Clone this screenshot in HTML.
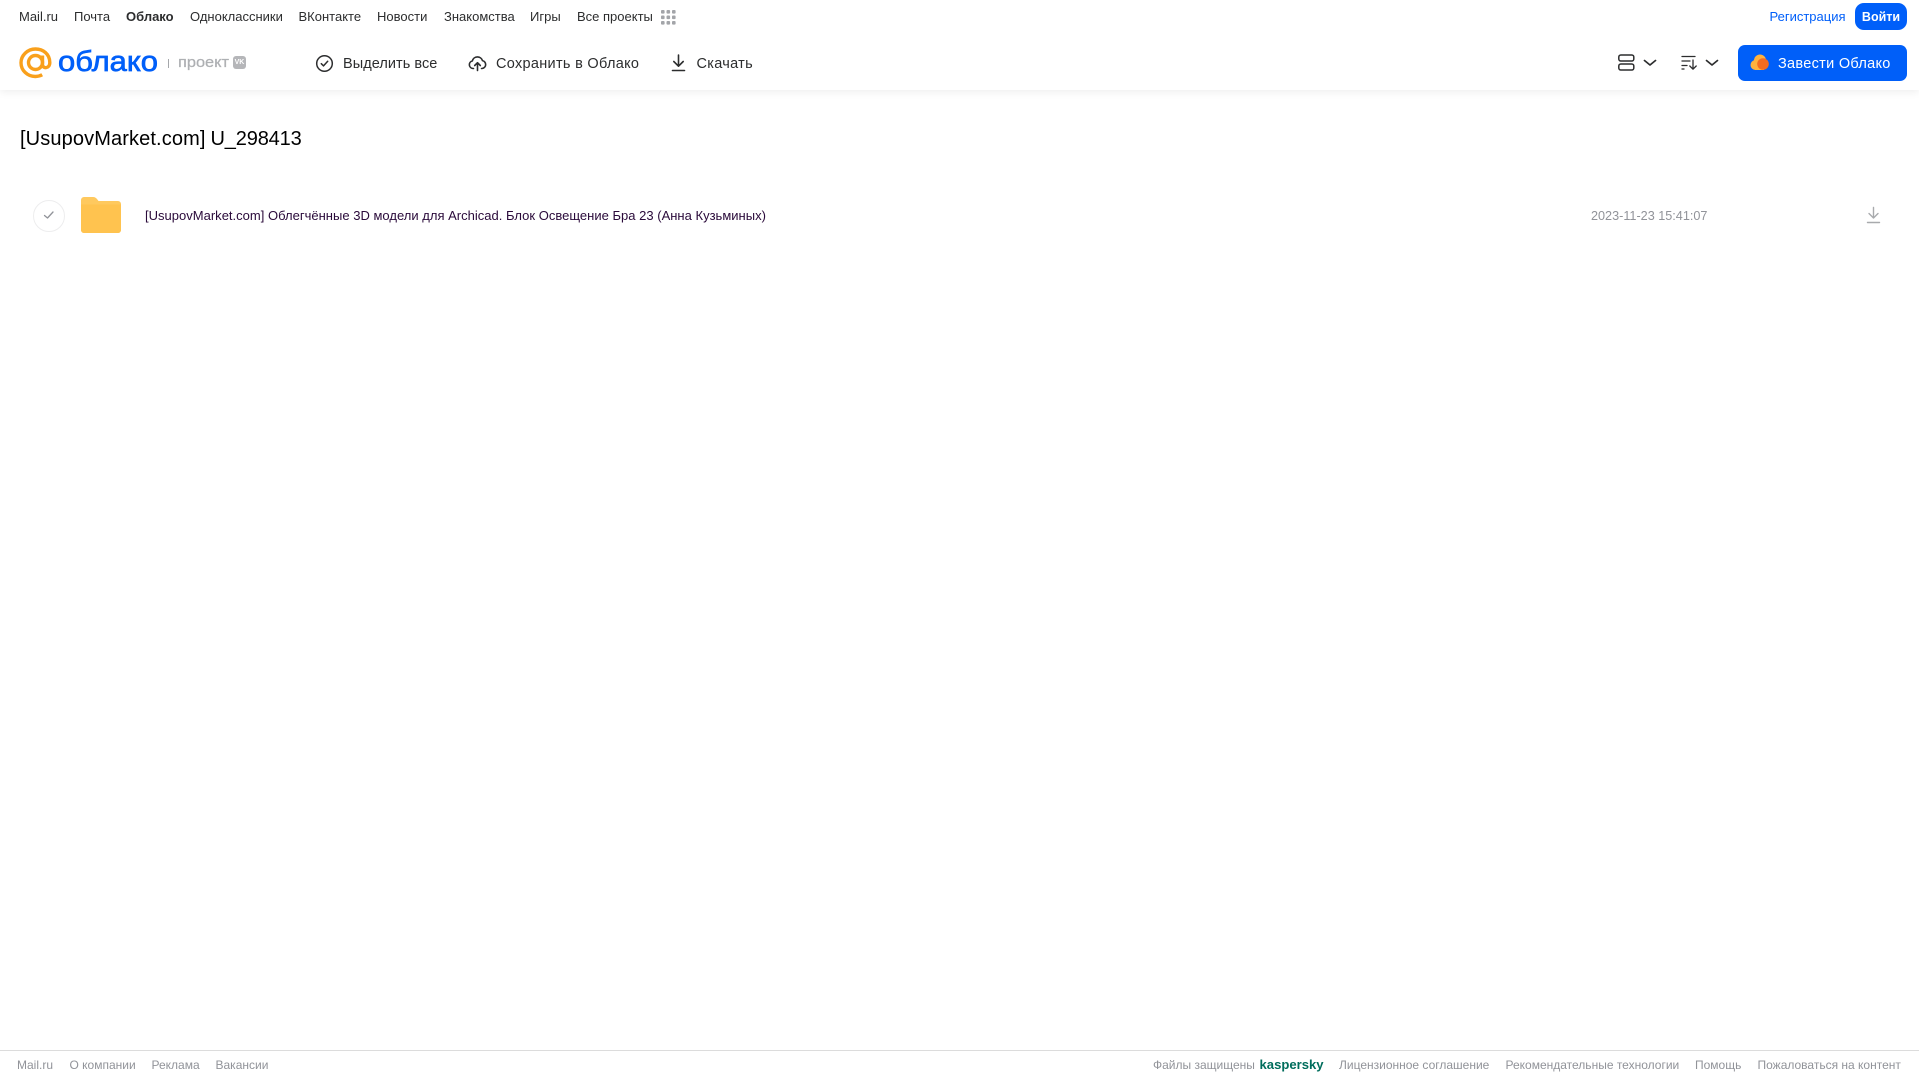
<!DOCTYPE html>
<html lang="ru">
<head>
<meta charset="utf-8">
<title>[UsupovMarket.com] U_298413</title>
<style>
html,body{margin:0;padding:0;background:#fff;width:1919px;height:1079px;overflow:hidden}
body{position:relative;font-family:"Liberation Sans",Arial,sans-serif}
.t{position:absolute;white-space:nowrap;line-height:16px}
.n{top:9px;font-size:13px;color:#2c2d2e}
.b{top:55.500px;font-size:14.500px;line-height:16px;color:#2c2d2e;letter-spacing:.3px}
.f{top:1057px;font-size:12px;color:#919399}
svg{position:absolute;overflow:visible}
</style>
</head>
<body>
<div style="position:absolute;left:0;top:0;width:1919px;height:90px;background:#fff;box-shadow:0 2px 8px rgba(0,0,0,.07)"></div>

<span class="t n" style="left:19px">Mail.ru</span>
<span class="t n" style="left:74px">Почта</span>
<span class="t n" style="left:126px;font-weight:bold">Облако</span>
<span class="t n" style="left:190px">Одноклассники</span>
<span class="t n" style="left:298.500px">ВКонтакте</span>
<span class="t n" style="left:377px">Новости</span>
<span class="t n" style="left:444px">Знакомства</span>
<span class="t n" style="left:530px">Игры</span>
<span class="t n" style="left:577px">Все проекты</span>
<svg style="left:661px;top:10px" width="15" height="15" fill="#a3a5a9"><rect width="3.600" height="3.600" rx="1"/><rect x="5.500" width="3.600" height="3.600" rx="1"/><rect x="11" width="3.600" height="3.600" rx="1"/><rect y="5.500" width="3.600" height="3.600" rx="1"/><rect x="5.500" y="5.500" width="3.600" height="3.600" rx="1"/><rect x="11" y="5.500" width="3.600" height="3.600" rx="1"/><rect y="11" width="3.600" height="3.600" rx="1"/><rect x="5.500" y="11" width="3.600" height="3.600" rx="1"/><rect x="11" y="11" width="3.600" height="3.600" rx="1"/></svg>

<span class="t n" style="left:1769.500px;color:#005ff9">Регистрация</span>
<div style="position:absolute;left:1855px;top:3px;width:52px;height:27px;border-radius:9px;background:#005ff9;color:#fff;font-size:12.500px;font-weight:bold;line-height:28px;text-align:center">Войти</div>

<svg style="left:19px;top:47px" width="33" height="32" viewBox="0 0 33 32" fill="none" stroke="#f9a01b" stroke-width="3.400"><circle cx="16.500" cy="15.500" r="7"/><path d="M23.500 8.500V17.500C23.500 22 30.800 22 30.800 15.500C30.800 7 24 2 16.500 2C8.500 2 2 8.500 2 15.700C2 23.500 8.500 29.500 16.300 29.500C19 29.500 21 29 23.200 27.800"/></svg>
<svg style="left:58px;top:44px" width="100" height="34"><text x="0" y="27" font-family="Liberation Sans,sans-serif" font-size="29" fill="#005ff9" stroke="#005ff9" stroke-width=".7" textLength="100" lengthAdjust="spacingAndGlyphs">облако</text></svg>
<div style="position:absolute;left:168px;top:59px;width:1px;height:9px;background:#a5a7ab"></div>
<svg style="left:178px;top:54px" width="52" height="18"><text x="0" y="13" font-family="Liberation Sans,sans-serif" font-size="15" fill="#aeb0b3" stroke="#aeb0b3" stroke-width=".25" textLength="51" lengthAdjust="spacingAndGlyphs">проект</text></svg>
<div style="position:absolute;left:233px;top:56px;width:13px;height:13px;border-radius:3px;background:#b5b6b9;color:#fff;font-size:7px;font-weight:bold;line-height:13px;text-align:center">VK</div>

<svg style="left:315px;top:53.500px" width="19" height="19" viewBox="0 0 19 19" fill="none" stroke="#2c2d2e" stroke-width="1.500" stroke-linecap="round" stroke-linejoin="round"><circle cx="9.500" cy="9.500" r="7.800"/><path d="M6.300 9.700l2.200 2.200 4.200-4.600"/></svg>
<span class="t b" style="left:343px;letter-spacing:.05px">Выделить все</span>
<svg style="left:468px;top:54px" width="19" height="18" viewBox="0 0 19 18" fill="none" stroke="#2c2d2e" stroke-width="1.600" stroke-linecap="round" stroke-linejoin="round"><path d="M5.500 14.500H5A3.800 3.800 0 0 1 4.300 7 5.300 5.300 0 0 1 14.500 6.600 4 4 0 0 1 14 14.500h-.5"/><path d="M9.500 16.500V9M6.700 11.500l2.800-2.800 2.800 2.800"/></svg>
<span class="t b" style="left:496px">Сохранить в Облако</span>
<svg style="left:671px;top:54px" width="15" height="18" viewBox="0 0 15 18" fill="none" stroke="#2c2d2e" stroke-width="1.600" stroke-linecap="round" stroke-linejoin="round"><path d="M7.500 1v11M2.800 7.500l4.700 4.700 4.700-4.700M1.500 16.500h12"/></svg>
<span class="t b" style="left:696.500px">Скачать</span>

<svg style="left:1617.500px;top:54px" width="17" height="17" fill="none" stroke="#2c2d2e" stroke-width="1.500"><rect x=".8" y="1" width="15" height="6" rx="2"/><rect x=".8" y="10" width="15" height="6" rx="2"/></svg>
<svg style="left:1643px;top:59px" width="14" height="8" fill="none" stroke="#2c2d2e" stroke-width="1.700" stroke-linecap="round" stroke-linejoin="round"><path d="M1.500 1.500L7 6l5.500-4.500"/></svg>
<svg style="left:1681px;top:55px" width="17" height="15" fill="none" stroke="#2c2d2e" stroke-width="1.300" stroke-linecap="round" stroke-linejoin="round"><path d="M1 1.500h13M1 6h8M1 10.500h5M1 14h2M12 5v9M8.800 11l3.200 3.200 3.200-3.200"/></svg>
<svg style="left:1705px;top:59px" width="14" height="8" fill="none" stroke="#2c2d2e" stroke-width="1.700" stroke-linecap="round" stroke-linejoin="round"><path d="M1.500 1.500L7 6l5.500-4.500"/></svg>

<div style="position:absolute;left:1738px;top:45px;width:169px;height:36px;border-radius:7px;background:#005ff9"></div>
<svg style="left:1750px;top:54px" width="20" height="17" viewBox="0 0 20 17"><circle cx="5.500" cy="11" r="5" fill="#ffb23e"/><circle cx="10" cy="6.500" r="6" fill="#ffb23e"/><rect x="5" y="9" width="9" height="7" fill="#ffb23e"/><circle cx="13" cy="10" r="5.800" fill="#f36c21"/></svg>
<span class="t" style="left:1778px;top:55.500px;font-size:14.500px;color:#fff;letter-spacing:.3px">Завести Облако</span>

<span class="t" style="left:20px;top:126.500px;font-size:20px;line-height:24px;color:#000;letter-spacing:.12px">[UsupovMarket.com]</span>
<span class="t" style="left:210.500px;top:126.500px;font-size:20px;line-height:24px;color:#000;letter-spacing:-.15px">U_298413</span>

<div style="position:absolute;left:33px;top:200px;width:30px;height:30px;border:1px solid #ededee;border-radius:50%"></div>
<svg style="left:43px;top:210px" width="12" height="10" fill="none" stroke="#919399" stroke-width="1.300" stroke-linecap="round" stroke-linejoin="round"><path d="M1.500 5.500l3 2.500 5.500-6"/></svg>
<svg style="left:81px;top:197px" width="40" height="36" viewBox="0 0 40 36"><path d="M3 0h9c2 0 3 1 4 2l1.500 2H37a3 3 0 0 1 3 3v26a3 3 0 0 1-3 3H3a3 3 0 0 1-3-3V3a3 3 0 0 1 3-3z" fill="#ffc95e"/><path d="M0 7.500h40V33a3 3 0 0 1-3 3H3a3 3 0 0 1-3-3z" fill="#ffc34f"/></svg>
<span class="t" style="left:145px;top:207.500px;font-size:13px;color:#2a0a3a;letter-spacing:.01px">[UsupovMarket.com] Облегчённые 3D модели для Archicad. Блок Освещение Бра 23 (Анна Кузьминых)</span>
<span class="t" style="left:1591px;top:207.500px;font-size:12.650px;color:#919399">2023-11-23 15:41:07</span>
<svg style="left:1866px;top:206px" width="15" height="18" viewBox="0 0 15 18" fill="none" stroke="#a8aaad" stroke-width="1.400" stroke-linecap="round" stroke-linejoin="round"><path d="M7.500 1.500v10.500M3 7.500l4.500 4.500L12 7.500M1.500 16.500h12"/></svg>

<div style="position:absolute;left:0;top:1050px;width:1919px;height:1px;background:#dcdcdc"></div>
<span class="t f" style="left:17px">Mail.ru</span>
<span class="t f" style="left:69.500px">О компании</span>
<span class="t f" style="left:151.500px">Реклама</span>
<span class="t f" style="left:215.500px">Вакансии</span>
<span class="t f" style="left:1153px">Файлы защищены</span>
<span class="t f" style="left:1259.500px;font-size:13.100px;font-weight:bold;color:#006d5c">kaspersky</span>
<span class="t f" style="left:1339px">Лицензионное соглашение</span>
<span class="t f" style="left:1505.500px">Рекомендательные технологии</span>
<span class="t f" style="left:1695px">Помощь</span>
<span class="t f" style="left:1757.500px">Пожаловаться на контент</span>
</body>
</html>
